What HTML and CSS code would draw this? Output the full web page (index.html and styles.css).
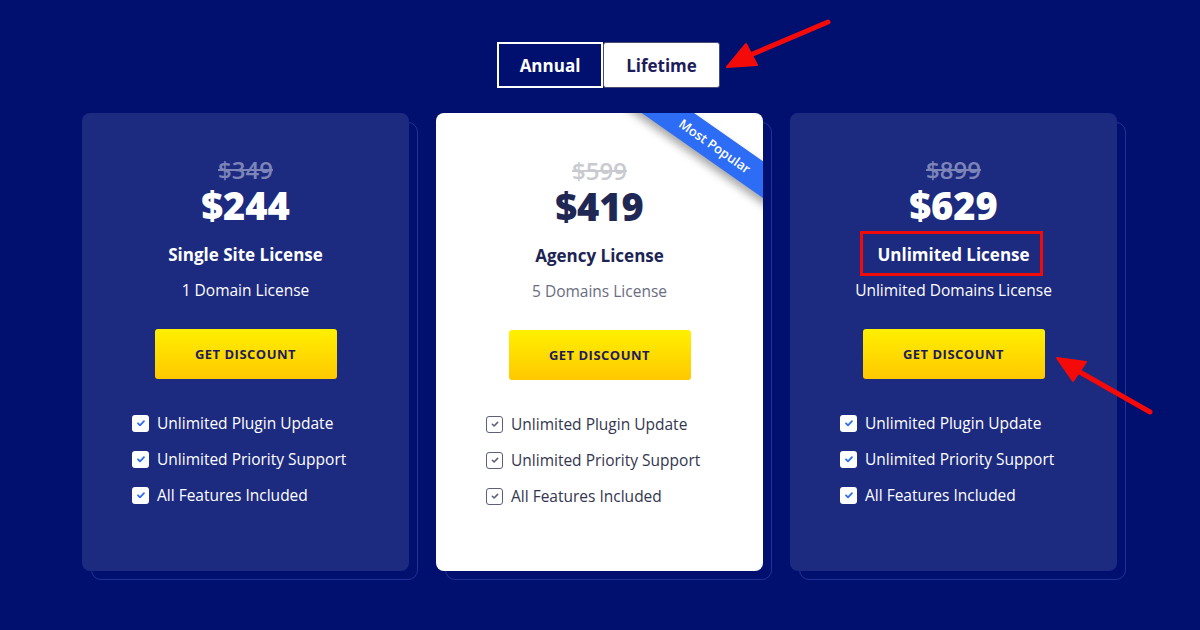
FILE: index.html
```html
<!DOCTYPE html>
<html>
<head>
<meta charset="utf-8">
<link rel="stylesheet" href="styles.css">
</head>
<body>
<div class="page">
  <div class="toggle">
    <div class="tab tab-annual">Annual</div>
    <div class="tab tab-lifetime">Lifetime</div>
  </div>
  <div class="cards">
    <div class="card card-dark">
      <div class="old">$349</div>
      <div class="price">$244</div>
      <div class="title">Single Site License</div>
      <div class="sub">1 Domain License</div>
      <div class="btn">GET DISCOUNT</div>
      <ul class="features">
        <li><span class="chk"><svg viewBox="0 0 16 16"><path d="M5 8.3l2 2 4-4.2"/></svg></span>Unlimited Plugin Update</li>
        <li><span class="chk"><svg viewBox="0 0 16 16"><path d="M5 8.3l2 2 4-4.2"/></svg></span>Unlimited Priority Support</li>
        <li><span class="chk"><svg viewBox="0 0 16 16"><path d="M5 8.3l2 2 4-4.2"/></svg></span>All Features Included</li>
      </ul>
    </div>
    <div class="card card-light">
      <div class="ribbon-wrap"><div class="ribbon">Most Popular</div></div>
      <div class="old">$599</div>
      <div class="price">$419</div>
      <div class="title">Agency License</div>
      <div class="sub">5 Domains License</div>
      <div class="btn">GET DISCOUNT</div>
      <ul class="features">
        <li><span class="chk"><svg viewBox="0 0 16 16"><path d="M5 8.3l2 2 4-4.2"/></svg></span>Unlimited Plugin Update</li>
        <li><span class="chk"><svg viewBox="0 0 16 16"><path d="M5 8.3l2 2 4-4.2"/></svg></span>Unlimited Priority Support</li>
        <li><span class="chk"><svg viewBox="0 0 16 16"><path d="M5 8.3l2 2 4-4.2"/></svg></span>All Features Included</li>
      </ul>
    </div>
    <div class="card card-dark">
      <div class="old">$899</div>
      <div class="price">$629</div>
      <div class="title">Unlimited License</div>
      <div class="sub">Unlimited Domains License</div>
      <div class="btn">GET DISCOUNT</div>
      <ul class="features">
        <li><span class="chk"><svg viewBox="0 0 16 16"><path d="M5 8.3l2 2 4-4.2"/></svg></span>Unlimited Plugin Update</li>
        <li><span class="chk"><svg viewBox="0 0 16 16"><path d="M5 8.3l2 2 4-4.2"/></svg></span>Unlimited Priority Support</li>
        <li><span class="chk"><svg viewBox="0 0 16 16"><path d="M5 8.3l2 2 4-4.2"/></svg></span>All Features Included</li>
      </ul>
    </div>
  </div>
  <svg class="annot" viewBox="0 0 1200 630" width="1200" height="630">
    <g stroke="#f50a0a" stroke-width="5" stroke-linecap="round" fill="#f50a0a">
      <line x1="828" y1="22" x2="748" y2="56"/>
      <polygon points="727,67 746,44 757,65" stroke-width="2" stroke-linejoin="round"/>
      <line x1="1150" y1="412" x2="1078" y2="371"/>
      <polygon points="1057,358 1086,362 1073,381" stroke-width="2" stroke-linejoin="round"/>
    </g>
    <rect x="861.5" y="232.5" width="180" height="42" fill="none" stroke="#f00a0a" stroke-width="3"/>
  </svg>
</div>
</body>
</html>
```
FILE: styles.css
```css
* { box-sizing: border-box; }
html, body { margin: 0; padding: 0; }
body {
  width: 1200px;
  height: 630px;
  overflow: hidden;
  background: #01106f;
  font-family: "Open Sans", "Noto Sans", sans-serif;
}
.page {
  position: relative;
  width: 1200px;
  height: 630px;
  padding-top: 42px;
  display: flex;
  flex-direction: column;
  align-items: center;
}
.toggle {
  display: flex;
  margin-left: 17px;
  height: 46px;
}
.tab {
  display: flex;
  align-items: center;
  justify-content: center;
  font-size: 17px;
  font-weight: 700;
}
.tab-annual {
  width: 106px;
  border: 2px solid #fff;
  color: #fff;
}
.tab-lifetime {
  width: 117px;
  background: #fff;
  border: 1.5px solid #4a4d70;
  border-radius: 3px;
  color: #1e1c5a;
}
.cards {
  position: relative;
  z-index: 0;
  display: flex;
  gap: 27px;
  margin-top: 25px;
  margin-left: -1px;
}
.card {
  position: relative;
  width: 327px;
  height: 458px;
  border-radius: 8px;
  padding-top: 43px;
  display: flex;
  flex-direction: column;
  align-items: center;
  text-align: center;
}
.card::before {
  content: "";
  position: absolute;
  left: 9px;
  top: 9px;
  right: -9px;
  bottom: -9px;
  border: 1px solid rgba(70, 90, 200, 0.45);
  border-radius: 10px;
  z-index: -1;
}
.card-dark { background: #1c2a80; color: #fff; }
.card-light { background: #fff; color: #1c2454; }
.old {
  font-size: 24px;
  line-height: 28px;
  font-weight: 600;
  text-decoration: line-through;
  text-decoration-thickness: 2px;
}
.card-dark .old { color: #7c84b8; }
.card-light .old { color: #c9cad0; margin-top: 1px; }
.price {
  font-size: 38px;
  line-height: 40px;
  font-weight: 800;
  margin-top: 1px;
}
.card-light .price { color: #1f2855; }
.title {
  font-size: 17px;
  line-height: 24px;
  font-weight: 700;
  margin-top: 18px;
}
.sub {
  font-size: 15.5px;
  line-height: 22px;
  margin-top: 12px;
}
.card-light .sub { color: #6a6d82; }
.btn {
  width: 182px;
  height: 50px;
  margin-top: 28px;
  border-radius: 3px;
  background: linear-gradient(#fff000, #ffc800);
  color: #1e1c5a;
  font-size: 13px;
  font-weight: 700;
  letter-spacing: 0.5px;
  display: flex;
  align-items: center;
  justify-content: center;
}
.features {
  list-style: none;
  margin: 26px 0 0 0;
  padding: 0 0 0 50px;
  align-self: stretch;
  text-align: left;
}
.features li {
  display: flex;
  align-items: center;
  height: 36px;
  font-size: 15.5px;
}
.card-light .features li { color: #33364f; }
.chk {
  width: 17px;
  height: 17px;
  border-radius: 3px;
  margin-right: 8px;
  display: flex;
  align-items: center;
  justify-content: center;
  flex: none;
}
.chk svg { width: 16px; height: 16px; }
.chk path { fill: none; stroke-width: 1.8; stroke-linecap: round; stroke-linejoin: round; }
.card-dark .chk { background: #fff; }
.card-dark .chk path { stroke: #2d6cf5; }
.card-light .chk { border: 1.5px solid #5d6078; }
.card-light .chk svg { width: 14px; height: 14px; }
.card-light .chk path { stroke: #5d6078; }
.ribbon-wrap {
  position: absolute;
  top: 0;
  right: 0;
  width: 140px;
  height: 110px;
  overflow: hidden;
  border-top-right-radius: 8px;
}
.ribbon {
  position: absolute;
  left: -8px;
  top: 18px;
  width: 200px;
  height: 30px;
  background: #2d6cf5;
  color: #fff;
  font-size: 13px;
  font-weight: 600;
  line-height: 30px;
  text-align: center;
  transform: rotate(35deg);
  transform-origin: center;
  box-shadow: 0 5px 8px rgba(0, 0, 0, 0.35);
}
.annot {
  position: absolute;
  left: 0;
  top: 0;
  pointer-events: none;
}
```
